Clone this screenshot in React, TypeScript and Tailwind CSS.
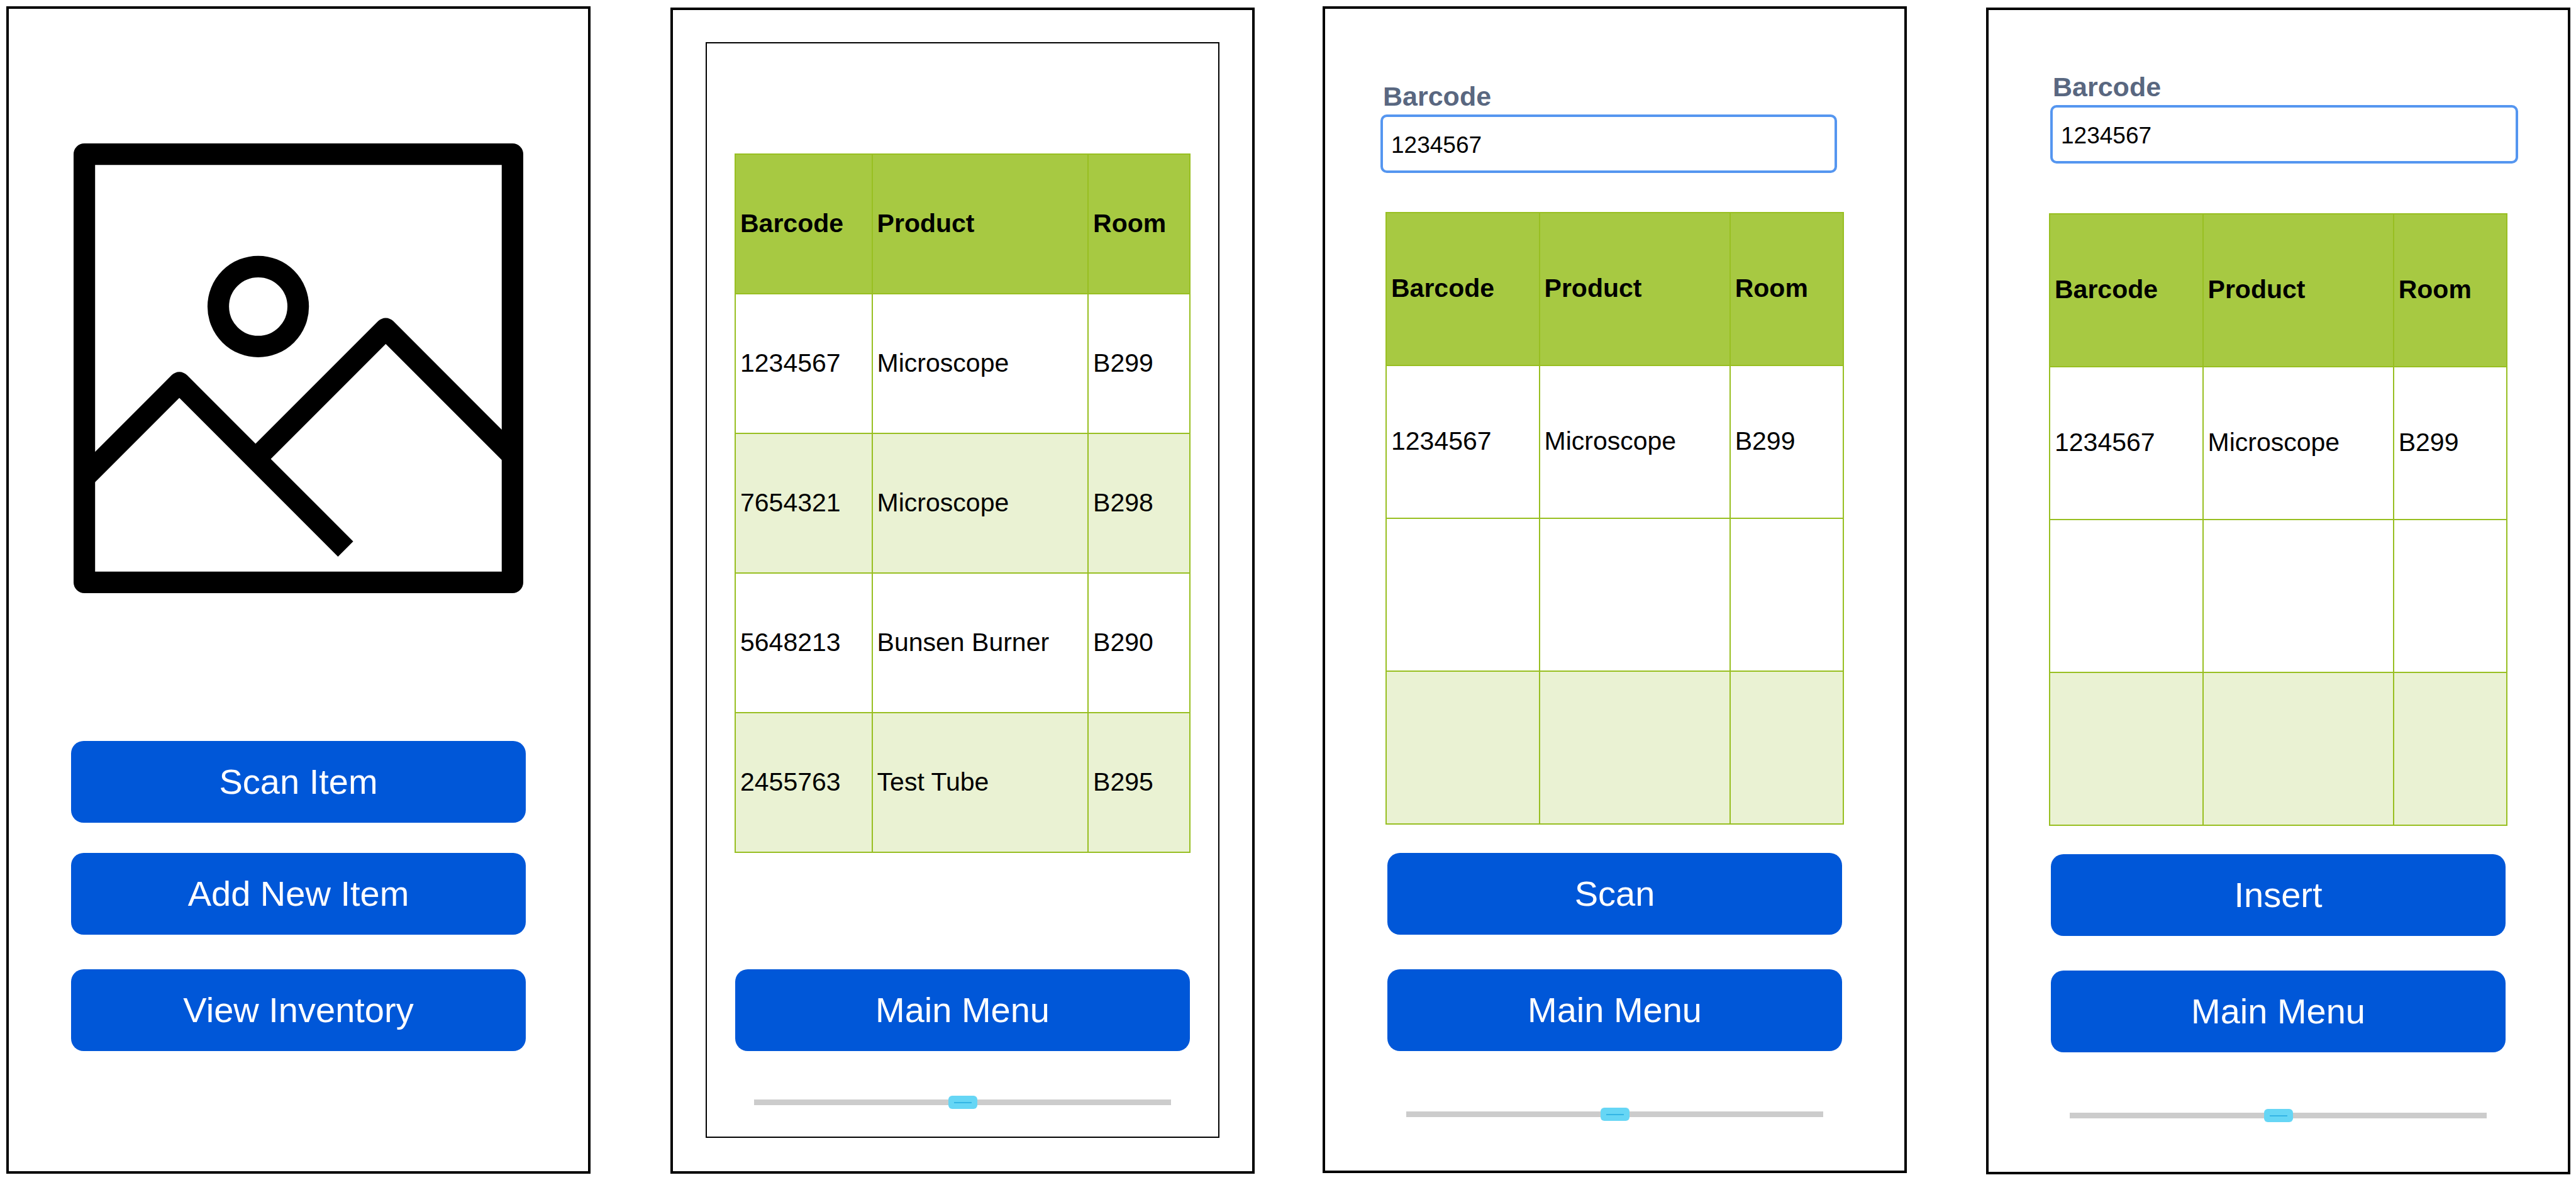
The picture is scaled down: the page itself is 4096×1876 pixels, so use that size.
import { useId } from "react";

type Item = { barcode: string; product: string; room: string; shaded?: boolean };

const inventory: Item[] = [
  { barcode: "1234567", product: "Microscope", room: "B299" },
  { barcode: "7654321", product: "Microscope", room: "B298", shaded: true },
  { barcode: "5648213", product: "Bunsen Burner", room: "B290" },
  { barcode: "2455763", product: "Test Tube", room: "B295", shaded: true },
];

const lookup: Item[] = [
  { barcode: "1234567", product: "Microscope", room: "B299" },
  { barcode: "", product: "", room: "" },
  { barcode: "", product: "", room: "", shaded: true },
];

function PictureIcon() {
  return (
    <svg
      viewBox="126 247 773 773"
      className="block aspect-square w-full"
      fill="none"
      stroke="#000"
      strokeWidth="37"
      strokeLinejoin="round"
      role="img"
      aria-label="Picture placeholder"
    >
      <rect x="144.5" y="265.5" width="736" height="736" />
      <circle cx="443.4" cy="527.4" r="68.7" />
      <path d="M144.5 821.6 L307.8 658.3 L593.6 944.1" />
      <path d="M438.8 789.4 L662.6 565.6 L880.5 783.5" />
    </svg>
  );
}

function ActionButton({ label }: { label: string }) {
  return (
    <button
      type="button"
      className="block h-[130px] w-full rounded-[20px] bg-[#0057d8] text-[56px] leading-none text-white"
    >
      {label}
    </button>
  );
}

function Slider({ label }: { label: string }) {
  return (
    <input
      type="range"
      min={0}
      max={100}
      defaultValue={50}
      aria-label={label}
      className="block h-[21px] w-full appearance-none bg-transparent [&::-webkit-slider-runnable-track]:h-[9px] [&::-webkit-slider-runnable-track]:bg-[#cccccc] [&::-webkit-slider-thumb]:-mt-[6px] [&::-webkit-slider-thumb]:h-[21px] [&::-webkit-slider-thumb]:w-[46px] [&::-webkit-slider-thumb]:appearance-none [&::-webkit-slider-thumb]:rounded-[6px] [&::-webkit-slider-thumb]:bg-[#66d6f5] [&::-webkit-slider-thumb]:bg-[linear-gradient(#33b5e5,#33b5e5)] [&::-webkit-slider-thumb]:bg-[length:28px_2px] [&::-webkit-slider-thumb]:bg-center [&::-webkit-slider-thumb]:bg-no-repeat"
    />
  );
}

function ItemTable({
  rows,
  rowClass,
  columns,
}: {
  rows: Item[];
  rowClass: string;
  columns: [string, string];
}) {
  const cell = "border-2 border-[#98bf21] px-[7px] pt-0 pb-0.5 text-left align-middle";
  return (
    <table className="w-full table-fixed border-collapse text-[41px] leading-none text-black">
      <colgroup>
        <col className={columns[0]} />
        <col className={columns[1]} />
        <col />
      </colgroup>
      <thead>
        <tr className={`bg-[#a7c942] ${rowClass}`}>
          <th scope="col" className={cell}>Barcode</th>
          <th scope="col" className={cell}>Product</th>
          <th scope="col" className={cell}>Room</th>
        </tr>
      </thead>
      <tbody>
        {rows.map((row, i) => (
          <tr key={i} className={`${row.shaded ? "bg-[#eaf2d3]" : "bg-white"} ${rowClass}`}>
            <td className={cell}>{row.barcode}</td>
            <td className={cell}>{row.product}</td>
            <td className={cell}>{row.room}</td>
          </tr>
        ))}
      </tbody>
    </table>
  );
}

function BarcodeField() {
  const id = useId();
  return (
    <div className="flex flex-col gap-[5px]">
      <label htmlFor={id} className="pl-1 text-[43px] leading-[48px] font-bold text-[#596780]">
        Barcode
      </label>
      <input
        id={id}
        type="text"
        defaultValue="1234567"
        className="h-[93px] w-full rounded-[10px] border-4 border-[#5596f0] bg-white px-[13px] pt-1 text-[37px] leading-none text-black"
      />
    </div>
  );
}

function LookupControls({ action }: { action: string }) {
  return (
    <div className="px-[96px] pb-[79px]">
      <ItemTable rows={lookup} rowClass="h-[243px]" columns={["w-[33.5%]", "w-[41.7%]"]} />
      <div className="mt-[45px] flex flex-col gap-[55px] px-[3px]">
        <ActionButton label={action} />
        <ActionButton label="Main Menu" />
      </div>
      <div className="mt-[90px] px-[33px]">
        <Slider label={`${action} screen position`} />
      </div>
    </div>
  );
}

export default function App() {
  return (
    <main className="flex min-h-screen items-start bg-white pr-[9px] pl-[10px] font-['Liberation_Sans',Arial,sans-serif]">
      <div className="mt-[10px] min-w-0 flex-1">
        <section className="border-4 border-black px-[99px] pt-[214px] pb-[191px]">
          <div className="px-[4px]">
            <PictureIcon />
          </div>
          <div className="mt-[235px] flex flex-col gap-12">
            <ActionButton label="Scan Item" />
            <ActionButton label="Add New Item" />
          </div>
          <div className="mt-[55px]">
            <ActionButton label="View Inventory" />
          </div>
        </section>
      </div>

      <div className="mt-[12px] ml-[127px] min-w-0 flex-1">
        <section className="border-4 border-black px-[52px] pt-[51px] pb-[53px]">
          <div className="border-2 border-black px-[44px] pt-[175px] pb-[44px]">
            <ItemTable rows={inventory} rowClass="h-[222px]" columns={["w-[30.1%]", "w-[47.5%]"]} />
            <div className="mt-[185px] px-px">
              <ActionButton label="Main Menu" />
            </div>
            <div className="mt-[71px] px-[31px]">
              <Slider label="Inventory screen position" />
            </div>
          </div>
        </section>
      </div>

      <div className="mt-[10px] ml-[108px] min-w-0 flex-1">
        <section className="border-4 border-black pt-[115px]">
          <div className="mb-[62px] pr-[107px] pl-[88px]">
            <BarcodeField />
          </div>
          <LookupControls action="Scan" />
        </section>
      </div>

      <div className="mt-[12px] ml-[126px] min-w-0 flex-1">
        <section className="border-4 border-black pt-[98px]">
          <div className="mb-[79px] pr-[79px] pl-[98px]">
            <BarcodeField />
          </div>
          <LookupControls action="Insert" />
        </section>
      </div>
    </main>
  );
}
